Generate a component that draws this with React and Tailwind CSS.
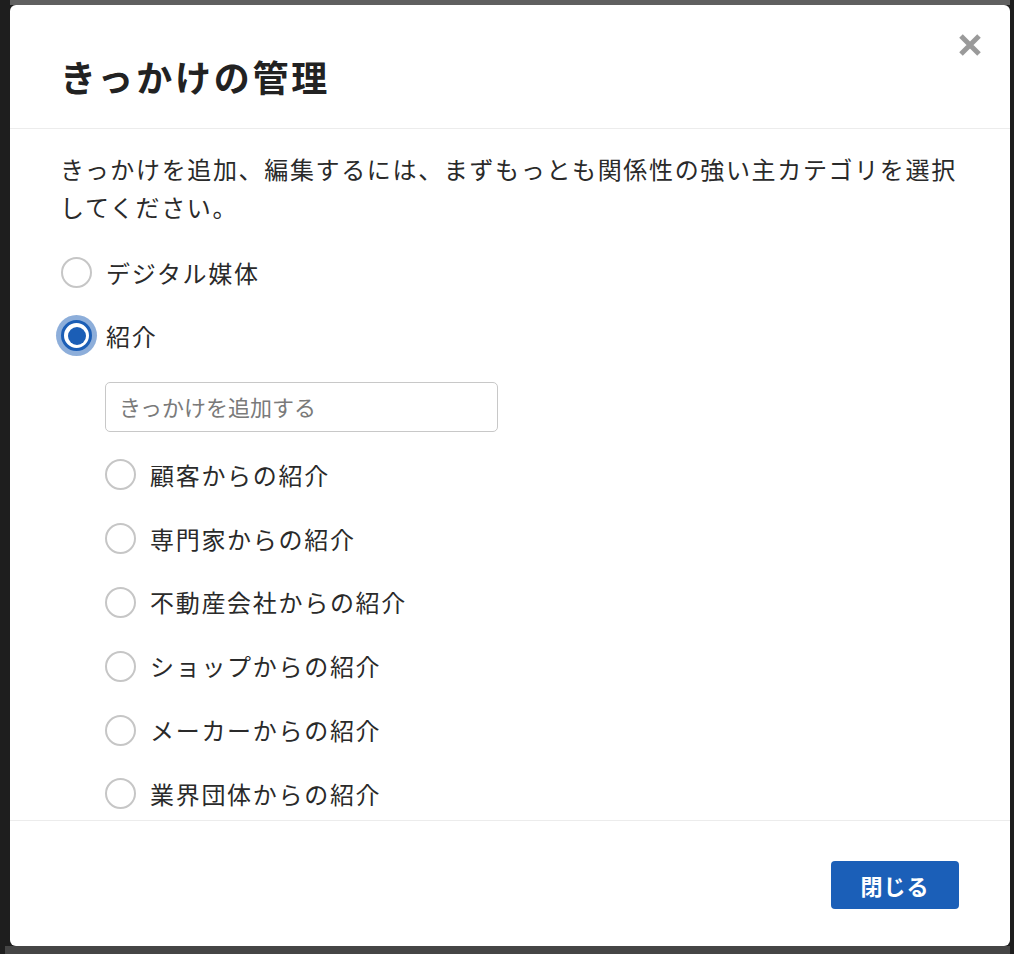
import React, { useState } from 'react';

const font = { fontFamily: '"Noto Sans CJK JP", "Noto Sans", sans-serif' };

const mainOptions = ['デジタル媒体', '紹介'];
const subOptions = [
  '顧客からの紹介',
  '専門家からの紹介',
  '不動産会社からの紹介',
  'ショップからの紹介',
  'メーカーからの紹介',
  '業界団体からの紹介',
];

const Radio = ({ checked }) =>
  checked ? (
    <span className="flex h-[31px] w-[31px] shrink-0 items-center justify-center rounded-full border-[3px] border-[#1b5eb6] bg-white shadow-[0_0_0_5px_rgba(27,94,182,0.5)]">
      <span className="h-[18px] w-[18px] rounded-full bg-[#1b5eb6]" />
    </span>
  ) : (
    <span className="h-[31px] w-[31px] shrink-0 rounded-full border-2 border-[#c6c6c6] bg-white" />
  );

const App = () => {
  const [category, setCategory] = useState('紹介');
  const [sub, setSub] = useState('');
  const [name, setName] = useState('');

  return (
    <div className="flex h-[954px] w-[1014px] flex-col bg-[#1e1e1e]" style={font}>
      <div className="ml-[10px] h-[5px] w-[1000px] bg-[#606060]" />
      <div className="flex">
        <div className="w-[10px] shrink-0" />
        <div className="relative flex h-[941px] w-[1000px] flex-col overflow-hidden rounded-md bg-white text-[#2a2a2a]">
          <div className="h-[124px] shrink-0 border-b border-[#ececec] px-[50px] pt-[45px]">
            <h2 className="text-[36px] font-bold leading-[52px] tracking-[2.8px] text-[#222]">きっかけの管理</h2>
          </div>
          <button
            type="button"
            className="absolute right-[28px] top-[28px] h-[24px] w-[24px]"
            aria-label="close"
          >
            <svg viewBox="0 0 24 24" className="h-[24px] w-[24px]">
              <path d="M3 3 L21 21 M21 3 L3 21" stroke="#9a9a9a" strokeWidth="5" />
            </svg>
          </button>

          <div className="flex-1 overflow-hidden px-[50px] pt-[21px]">
            <p className="text-[24px] leading-[38px] tracking-[1.65px]">
              きっかけを追加、編集するには、まずもっとも関係性の強い主カテゴリを選択してください。
            </p>
            <div className="mt-[15px] flex flex-col">
              {mainOptions.map((opt) => (
                <label
                  key={opt}
                  onClick={() => setCategory(opt)}
                  className="flex h-[63px] cursor-pointer items-center gap-[14px] pl-px text-[24px] tracking-[1.7px]"
                >
                  <Radio checked={category === opt} />
                  <span>{opt}</span>
                </label>
              ))}
            </div>
            <input
              type="text"
              value={name}
              onChange={(e) => setName(e.target.value)}
              placeholder="きっかけを追加する"
              className="ml-[45px] mt-[15px] h-[50px] w-[393px] rounded-[5px] border border-[#c8c8c8] px-[13px] pb-[3px] text-[22px] text-[#333] placeholder-[#7a7a7a] outline-none"
            />
            <div className="mt-[11px] flex flex-col pl-[45px]">
              {subOptions.map((opt) => (
                <label
                  key={opt}
                  onClick={() => setSub(opt)}
                  className="flex h-[63.8px] shrink-0 cursor-pointer items-center gap-[14px] text-[24px] tracking-[1.7px]"
                >
                  <Radio checked={sub === opt} />
                  <span>{opt}</span>
                </label>
              ))}
            </div>
          </div>

          <div className="flex h-[126px] shrink-0 justify-end border-t border-[#ececec] pr-[51px] pt-[40px]">
            <button
              type="button"
              className="h-[48px] w-[128px] rounded-[4px] bg-[#1b5fb8] text-[22px] font-bold tracking-[1px] text-white"
            >
              閉じる
            </button>
          </div>
        </div>
        <div className="w-[4px] shrink-0" />
      </div>
      <div className="ml-[5px] h-[8px] w-[1005px] bg-[#454545]" />
    </div>
  );
};

export default App;
